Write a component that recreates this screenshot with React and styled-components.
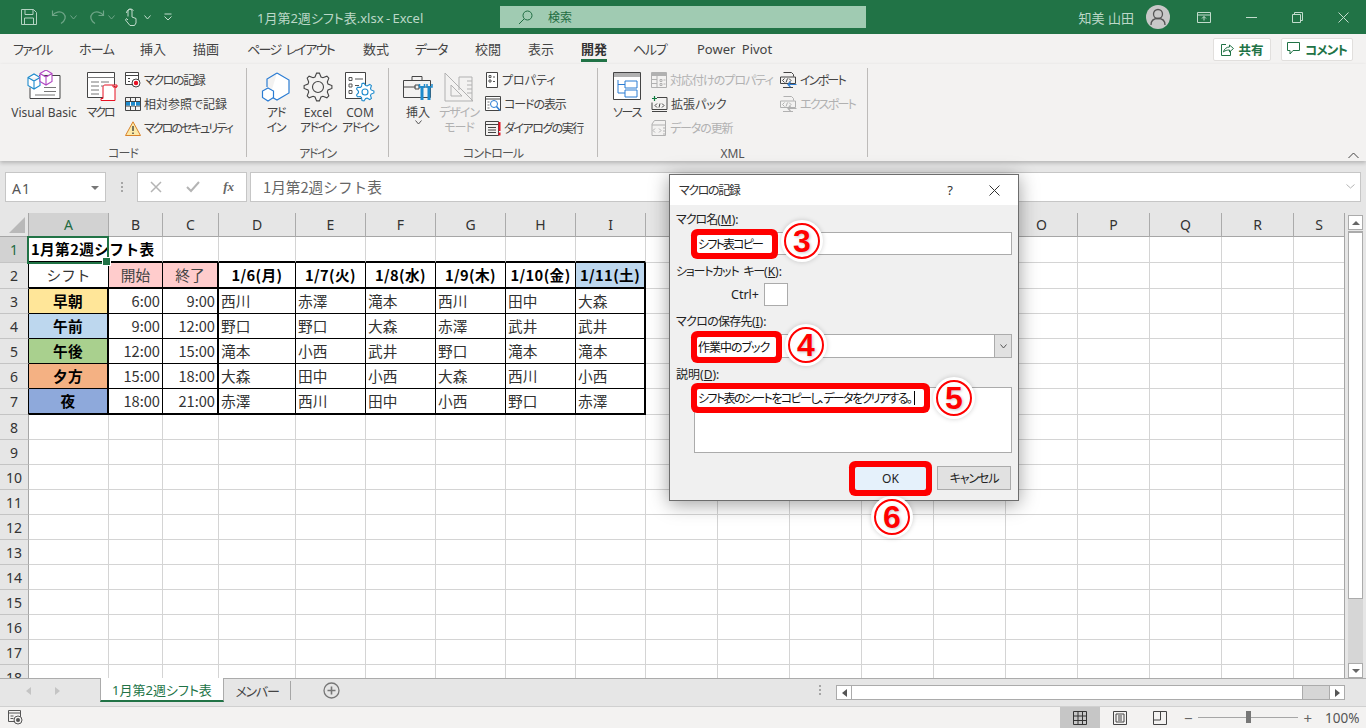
import React from 'react';
import styled, { createGlobalStyle } from 'styled-components';

const UI_FONT = '"Noto Sans", "Noto Sans CJK JP", sans-serif';
const CELL_FONT = '"Noto Sans CJK JP", sans-serif';
const GREEN = '#217346';

const GlobalStyle = createGlobalStyle`
  html, body { margin: 0; padding: 0; background: #fff; }
  * { box-sizing: border-box; }
  body {
    font-family: ${UI_FONT};
    font-feature-settings: "palt";
    overflow: hidden;
  }
`;

const Page = styled.div`
  position: relative;
  width: 1366px;
  height: 728px;
  display: flex;
  flex-direction: column;
  overflow: hidden;
  color: #444;
  font-size: 12px;
`;

// the reference's UI font has much narrower kana than Noto, so kana runs get squeezed
const Tight = styled.span`
  letter-spacing: ${p => p.$ls}px;
`;

/* ---------- title bar ---------- */
const TitleBar = styled.div`
  height: 34px;
  flex: none;
  background: ${GREEN};
  display: flex;
  align-items: center;
  color: #c3dccd;
`;
const Qat = styled.div`
  width: 257px;
  flex: none;
  display: flex;
  align-items: center;
  padding-left: 20px;
`;
const QatSlot = styled.span`
  display: flex;
  width: ${p => p.$w}px;
  flex: none;
`;
const FileName = styled.div`
  width: 243px;
  flex: none;
  font-size: 13px;
  white-space: pre;
  word-spacing: -1px;
  color: #bcd8c8;
`;
const SearchBox = styled.div`
  width: 366px;
  height: 22px;
  flex: none;
  background: #a0cbb2;
  display: flex;
  align-items: center;
  padding-left: 18px;
  gap: 15px;
  color: #1f6d42;
  font-size: 12px;
`;
const UserName = styled.div`
  margin-left: auto;
  font-size: 13px;
  color: #bcd8c8;
`;
const Avatar = styled.div`
  width: 24px;
  height: 24px;
  margin: 0 27px 0 12px;
  border-radius: 50%;
  background: #c8c8c8;
  display: flex;
  align-items: center;
  justify-content: center;
`;
const WinButtons = styled.div`
  display: flex;
  align-items: center;
  gap: 35px;
  padding-right: 17px;
`;

/* ---------- ribbon ---------- */
const TabRow = styled.div`
  height: 30px;
  flex: none;
  background: #f3f2f1;
  display: flex;
  padding-left: 13px;
  font-size: 13px;
  color: #444;
`;
const RibbonTab = styled.div`
  width: ${p => p.$w}px;
  flex: none;
  white-space: pre;
`;
const TabText = styled.span`
  display: inline-block;
  height: 28px;
  line-height: 30px;
  letter-spacing: ${p => p.$ls || 0}px;
  word-spacing: 3px;
  font-weight: ${p => (p.$active ? 700 : 400)};
  color: ${p => (p.$active ? '#333' : '#444')};
  border-bottom: ${p => (p.$active ? `3px solid ${GREEN}` : 'none')};
`;
const ShareGroup = styled.div`
  margin-left: auto;
  margin-right: 13px;
  align-self: center;
  display: flex;
  gap: 10px;
`;
const ShareButton = styled.div`
  width: ${p => p.$w}px;
  height: 23px;
  background: #fff;
  border: 1px solid #e1dfdd;
  border-radius: 2px;
  display: flex;
  align-items: center;
  justify-content: center;
  gap: 4px;
  color: ${GREEN};
  font-weight: 700;
  font-size: 12.5px;
`;
const Ribbon = styled.div`
  height: 97px;
  flex: none;
  position: relative;
  z-index: 2;
  background: #f3f2f1;
  display: flex;
  box-shadow: 0 2px 4px rgba(0, 0, 0, 0.22);
`;
const Group = styled.div`
  width: ${p => p.$w}px;
  flex: none;
  height: 89px;
  margin-top: 4px;
  display: flex;
  flex-direction: column;
  border-right: 1px solid #bdbbb9;
`;
const GroupBody = styled.div`
  height: 78px;
  flex: none;
  display: flex;
  padding-left: ${p => p.$pad}px;
`;
const GroupLabel = styled.div`
  text-align: center;
  font-size: 12px;
  line-height: 16px;
  letter-spacing: ${p => p.$ls || 0}px;
  color: #555;
`;
const BigButton = styled.div`
  width: ${p => p.$w}px;
  flex: none;
  display: flex;
  flex-direction: column;
  align-items: center;
  text-align: center;
  line-height: 15px;
  font-size: 12px;
  color: ${p => (p.$off ? '#b1b1b1' : '#444')};
  white-space: pre;
`;
const BigIcon = styled.div`
  height: 34px;
  margin-bottom: 3px;
  display: flex;
  align-items: flex-end;
  transform: translateX(${p => p.$shift || 0}px);
  padding-bottom: ${p => p.$lift || 0}px;
`;
const SmallColumn = styled.div`
  width: ${p => (p.$w ? `${p.$w}px` : 'auto')};
  flex: none;
  display: flex;
  flex-direction: column;
  margin-left: ${p => p.$ml || 0}px;
`;
const SmallButton = styled.div`
  height: 24px;
  display: flex;
  align-items: center;
  gap: 3px;
  white-space: nowrap;
  font-size: 12px;
  letter-spacing: ${p => p.$ls || 0}px;
  color: ${p => (p.$off ? '#b1b1b1' : '#444')};
`;
const Collapse = styled.div`
  align-self: flex-end;
  margin: 0 7px 2px auto;
  display: flex;
`;

/* ---------- formula bar ---------- */
const FormulaBar = styled.div`
  height: 52px;
  flex: none;
  background: #e6e6e6;
  display: flex;
  padding: 11px 5px 0;
  align-items: flex-start;
`;
const NameBox = styled.div`
  width: 101px;
  height: 30px;
  background: #fff;
  border: 1px solid #c6c6c6;
  display: flex;
  align-items: center;
  justify-content: space-between;
  padding: 2px 6px 0;
  font-size: 14px;
  letter-spacing: 1px;
  color: #555;
`;
const Caret = styled.span`
  width: 0;
  height: 0;
  border-left: 4px solid transparent;
  border-right: 4px solid transparent;
  border-top: 4px solid #777;
`;
const Dots = styled.div`
  width: 31px;
  height: 30px;
  display: flex;
  flex-direction: column;
  align-items: center;
  justify-content: center;
  gap: 2px;
  & > i {
    width: 2px;
    height: 2px;
    background: #a6a6a6;
  }
`;
const FnBox = styled.div`
  width: 110px;
  height: 30px;
  background: #fff;
  border: 1px solid #c6c6c6;
  display: flex;
  align-items: center;
  justify-content: space-between;
  padding: 0 12px;
  margin-right: 3px;
  color: #777;
`;
const FormulaInput = styled.div`
  flex: 1;
  height: 30px;
  background: #fff;
  border: 1px solid #c6c6c6;
  display: flex;
  align-items: center;
  justify-content: space-between;
  padding: 0 5px 2px 12px;
  font-family: ${CELL_FONT};
  font-feature-settings: normal;
  font-size: 14.67px;
  color: #666;
`;

/* ---------- sheet ---------- */
const SheetArea = styled.div`
  flex: 1;
  min-height: 0;
  display: flex;
  background: #e6e6e6;
`;
const Sheet = styled.div`
  width: 1345px;
  flex: none;
  overflow: hidden;
  display: grid;
  grid-template-columns: ${p => p.$cols};
  grid-template-rows: ${p => p.$rows};
  font-family: ${CELL_FONT};
  font-feature-settings: normal;
  font-size: 14.67px;
  color: #000;
  background: #fff;
  border-right: 1px solid #a6a6a6;
`;
const Corner = styled.div`
  background: #e6e6e6;
  border-right: 1px solid #a6a6a6;
  border-bottom: 1px solid #a6a6a6;
  display: flex;
  align-items: flex-end;
  justify-content: flex-end;
  padding: 0 3px 3px 0;
`;
const ColHead = styled.div`
  background: ${p => (p.$sel ? '#d2d2d2' : '#e6e6e6')};
  border-right: 1px solid #ababab;
  border-bottom: 1px solid #a6a6a6;
  display: flex;
  align-items: center;
  justify-content: center;
  font-size: 14px;
  font-family: ${UI_FONT};
  color: ${p => (p.$sel ? '#1f6b42' : '#333')};
`;
const RowHead = styled.div`
  background: ${p => (p.$sel ? '#d2d2d2' : '#e6e6e6')};
  border-right: 1px solid ${p => (p.$edge ? '#000' : '#a6a6a6')};
  border-bottom: 1px solid #c4c4c4;
  display: flex;
  align-items: center;
  justify-content: center;
  font-size: 14px;
  font-family: ${UI_FONT};
  color: ${p => (p.$sel ? '#1f6b42' : '#333')};
`;
const edge = v =>
  v === 'thick' ? '2px solid #000' : v === 'thin' ? '1px solid #000' : '1px solid #d4d4d4';
const Cell = styled.div`
  position: relative;
  min-width: 0;
  display: flex;
  align-items: center;
  white-space: nowrap;
  padding: 0 2px 2px;
  justify-content: ${p => p.$align || 'flex-start'};
  background: ${p => p.$bg || 'transparent'};
  font-weight: ${p => (p.$bold ? 700 : 400)};
  letter-spacing: ${p => (p.$bold ? 0.4 : 0)}px;
  color: ${p => p.$color || '#000'};
  border-right: ${p => edge(p.$r)};
  border-bottom: ${p => edge(p.$b)};
`;
const Selection = styled.div`
  position: absolute;
  left: -2px;
  top: -1px;
  right: -1px;
  bottom: -3px;
  border: 2px solid ${GREEN};
  pointer-events: none;
  z-index: 1;
  &::after {
    content: '';
    position: absolute;
    right: -4px;
    bottom: -4px;
    width: 7px;
    height: 7px;
    background: ${GREEN};
    border: 1px solid #fff;
  }
`;
const VScroll = styled.div`
  flex: 1;
  display: flex;
  flex-direction: column;
  padding: 2px 0 0 3px;
`;
const ScrollBtn = styled.div`
  width: 15px;
  height: 15px;
  flex: none;
  background: #fff;
  border: 1px solid #ababab;
  display: flex;
  align-items: center;
  justify-content: center;
`;
const VThumb = styled.div`
  width: 15px;
  height: 368px;
  margin-top: 1px;
  flex: none;
  background: #fff;
  border: 1px solid #ababab;
  border-top-width: 2px;
`;
const VTrack = styled.div`
  flex: 1;
  width: 15px;
  background: #d6d6d6;
`;
const Tri = styled.span`
  width: 0;
  height: 0;
  border-left: 4px solid transparent;
  border-right: 4px solid transparent;
  ${p => (p.$up ? 'border-bottom: 4px solid #666;' : 'border-top: 4px solid #666;')}
`;

/* ---------- sheet tabs ---------- */
const TabsBar = styled.div`
  height: 28px;
  flex: none;
  background: #e6e6e6;
  border-top: 1px solid #ababab;
  display: flex;
  align-items: flex-start;
  font-size: 13px;
  position: relative;
  z-index: 1;
`;
const NavArrows = styled.div`
  width: 100px;
  height: 24px;
  flex: none;
  display: flex;
  align-items: center;
  padding-left: 26px;
  gap: 24px;
`;
const SideTri = styled.span`
  width: 0;
  height: 0;
  border-top: 4px solid transparent;
  border-bottom: 4px solid transparent;
  ${p => (p.$left ? `border-right: 5px solid ${p.$c};` : `border-left: 5px solid ${p.$c};`)}
`;
const ActiveTab = styled.div`
  width: 124px;
  height: 24px;
  margin-top: -1px;
  flex: none;
  background: #fff;
  border-left: 1px solid #ababab;
  border-right: 1px solid #ababab;
  border-bottom: 2px solid ${GREEN};
  color: ${GREEN};
  display: flex;
  align-items: center;
  justify-content: center;
`;
const OtherTab = styled.div`
  width: 67px;
  height: 19px;
  flex: none;
  border-right: 1px solid #a6a6a6;
  margin-top: 2px;
  display: flex;
  align-items: center;
  justify-content: center;
  color: #444;
`;
const AddSheet = styled.div`
  margin: 3px 0 0 32px;
  display: flex;
`;
const SplitDots = styled(Dots)`
  width: 10px;
  height: 22px;
  margin-left: 475px;
`;
const HScroll = styled.div`
  margin: 6px 0 0 11px;
  width: 509px;
  height: 15px;
  display: flex;
  align-items: stretch;
  background: #d6d6d6;
  border: 1px solid #ababab;
`;
const HBtn = styled.div`
  width: 15px;
  flex: none;
  background: #fff;
  display: flex;
  align-items: center;
  justify-content: center;
  border-${p => p.$side}: 1px solid #ababab;
`;
const HThumb = styled.div`
  width: 451px;
  flex: none;
  background: #fff;
  border-right: 1px solid #ababab;
`;
const HGap = styled.div`
  flex: 1;
`;

/* ---------- status bar ---------- */
const StatusBar = styled.div`
  height: 22px;
  flex: none;
  background: #f3f2f1;
  border-top: 1px solid #d0d0d0;
  display: flex;
  align-items: center;
  padding-left: 8px;
  color: #555;
`;
const ViewButtons = styled.div`
  margin-left: auto;
  display: flex;
  height: 100%;
`;
const ViewButton = styled.div`
  width: 40px;
  display: flex;
  align-items: center;
  justify-content: center;
  background: ${p => (p.$active ? '#c6c6c6' : 'transparent')};
`;
const Zoomer = styled.div`
  display: flex;
  align-items: center;
  justify-content: space-between;
  width: 128px;
  margin-left: 4px;
  color: #666;
  font-size: 15px;
`;
const Slider = styled.div`
  position: relative;
  width: 100px;
  flex: none;
  height: 1px;
  background: #a6a6a6;
`;
const SliderThumb = styled.span`
  position: absolute;
  left: 48px;
  top: -6px;
  width: 5px;
  height: 12px;
  background: #777;
`;
const ZoomValue = styled.div`
  width: 41px;
  margin-left: 13px;
  font-size: 13.5px;
  color: #555;
`;

/* ---------- dialog ---------- */
const Dialog = styled.div`
  position: absolute;
  left: 669px;
  top: 174px;
  width: 350px;
  height: 327px;
  z-index: 5;
  background: #f0f0f0;
  border: 1px solid #6d6d6d;
  box-shadow: 0 3px 18px rgba(0, 0, 0, 0.38);
  color: #222;
  font-size: 12px;
`;
const DialogTitle = styled.div`
  height: 30px;
  background: #fff;
  display: flex;
  align-items: center;
  padding: 0 18px 0 9px;
  color: #333;
`;
const HelpMark = styled.span`
  margin-left: auto;
  margin-right: 36px;
  font-size: 13px;
`;
const DialogBody = styled.div`
  padding: 7px 6px 0 6px;
`;
const FieldLabel = styled.div`
  height: 16px;
  line-height: 16px;
  margin-top: ${p => p.$mt || 0}px;
  word-spacing: 3px;
  & u {
    text-underline-offset: 1px;
  }
`;
const Field = styled.div`
  position: relative;
  margin: ${p => p.$mt}px 0 0 18px;
  width: 318px;
  height: ${p => p.$h}px;
  background: #fff;
  border: 1px solid #ababab;
  display: flex;
  justify-content: flex-end;
`;
const Highlight = styled.div`
  position: absolute;
  left: 2px;
  top: ${p => p.$top}px;
  width: ${p => p.$w}px;
  height: ${p => p.$h}px;
  background: #fff;
  box-shadow: 0 0 0 6px #f00;
  border-radius: 2px;
  display: flex;
  align-items: center;
  padding-left: 1px;
  white-space: nowrap;
  color: #111;
  letter-spacing: ${p => p.$ls}px;
  z-index: 1;
`;
const TextCursor = styled.i`
  width: 1px;
  height: 14px;
  background: #000;
  margin-left: 3px;
`;
const Badge = styled.div`
  position: absolute;
  left: ${p => p.$left}px;
  top: ${p => p.$top}px;
  width: 36px;
  height: 36px;
  border-radius: 50%;
  background: #fff;
  border: 2px solid #f00;
  box-shadow: 0 0 0 3px #fff, 0 0 5px 3px rgba(0, 0, 0, 0.18);
  color: #f00;
  display: flex;
  align-items: center;
  justify-content: center;
  font-family: "Liberation Sans", sans-serif;
  font-weight: 700;
  font-size: 32px;
  line-height: 1;
  text-shadow: 1px 1px 3px rgba(0, 0, 0, 0.22);
  z-index: 2;
`;
const CtrlRow = styled.div`
  margin: 3px 0 0 55px;
  display: flex;
  align-items: center;
  gap: 5px;
  height: 23px;
  font-size: 12.5px;
`;
const KeyBox = styled.div`
  width: 24px;
  height: 23px;
  background: #fff;
  border: 1px solid #ababab;
`;
const SelectArrow = styled.div`
  width: 17px;
  background: #e1e1e1;
  border-left: 1px solid #ababab;
  display: flex;
  align-items: center;
  justify-content: center;
`;
const ButtonRow = styled.div`
  position: relative;
  margin-top: 13px;
  display: flex;
  justify-content: flex-end;
  gap: 11px;
  padding-right: 1px;
`;
const OkButton = styled.div`
  width: 71px;
  height: 23px;
  margin-top: 1px;
  background: #e5f1fb;
  box-shadow: 0 0 0 6px #f00;
  border-radius: 2px;
  display: flex;
  align-items: center;
  justify-content: center;
  color: #222;
`;
const CancelButton = styled.div`
  width: 74px;
  height: 24px;
  background: #e1e1e1;
  border: 1px solid #ababab;
  display: flex;
  align-items: center;
  justify-content: center;
`;

/* ---------- icons ---------- */
const Svg = ({ w, h, children, style }) => (
  <svg width={w} height={h} viewBox={`0 0 ${w} ${h}`} fill="none" style={{ display: 'block', flex: 'none', ...style }}>
    {children}
  </svg>
);

const SaveIcon = () => (
  <Svg w={18} h={18}>
    <path d="M1.5 1.5h12l3 3v12h-15z M5 1.5v5h8v-5 M4.5 16.5v-6.5h9v6.5" stroke="#b4d3c2" />
  </Svg>
);
const UndoIcon = ({ flip }) => (
  <Svg w={16} h={16} style={flip ? { transform: 'scaleX(-1)' } : undefined}>
    <path d="M1.5 1.5v5h5 M1.5 6.5C4 3 9 1.500 12.500 4.500c3 3 2 7-2.500 10" stroke="#6ea587" strokeWidth="1.2" />
  </Svg>
);
const TouchIcon = () => (
  <Svg w={14} h={18}>
    <path d="M4 8.500V3a2 2 0 0 1 4 0v6l4 1.500V15l-1.500 2.500H6L1.500 12l1-1.500L4 12 M2.500 5a4 4 0 0 1 7-2.500" stroke="#c3dccd" />
  </Svg>
);
const Chevron = ({ c = '#c3dccd', w = 7 }) => (
  <Svg w={w} h={5}>
    <path d={`M.5 .5L${w / 2} 4L${w - 0.5} .5`} stroke={c} />
  </Svg>
);
const QatMore = () => (
  <Svg w={8} h={8}>
    <path d="M.5 1h7 M.5 3.500L4 7l3.500-3.500" stroke="#c3dccd" />
  </Svg>
);
const SearchIcon = () => (
  <Svg w={15} h={15}>
    <circle cx="9.500" cy="5.500" r="4.500" stroke="#1f6d42" />
    <path d="M6 9L1 14" stroke="#1f6d42" />
  </Svg>
);
const AvatarIcon = () => (
  <Svg w={16} h={18}>
    <circle cx="8" cy="6" r="4.500" stroke="#555" strokeWidth="1.300" />
    <path d="M1 17c0-4 2.500-6.500 7-6.500s7 2.500 7 6.500" stroke="#555" strokeWidth="1.300" />
  </Svg>
);
const RibbonDisplayIcon = () => (
  <Svg w={14} h={11}>
    <path d="M.5 .5h13v10H.5z M.5 3h13 M7 8.500V4.500 M5 6.500l2-2 2 2" stroke="#c3dccd" />
  </Svg>
);
const MinIcon = () => (
  <Svg w={11} h={3}>
    <path d="M0 1.500h11" stroke="#c3dccd" />
  </Svg>
);
const RestoreIcon = () => (
  <Svg w={11} h={11}>
    <path d="M.5 2.500h8v8h-8z M2.500 2.500v-2h8v8h-2" stroke="#c3dccd" />
  </Svg>
);
const CloseIcon = ({ c = '#c3dccd', s = 11 }) => (
  <Svg w={s} h={s}>
    <path d={`M.5 .5L${s - 0.5} ${s - 0.5} M${s - 0.5} .5L.5 ${s - 0.5}`} stroke={c} />
  </Svg>
);
const ShareIcon = () => (
  <Svg w={14} h={14}>
    <path d="M6 2.500H1.500v11h9V9 M3.500 10c.5-3 3-5 6-5V3l4 3.500-4 3.500V8c-2.500 0-4.500.5-6 2z" stroke={GREEN} />
  </Svg>
);
const CommentIcon = () => (
  <Svg w={14} h={14}>
    <path d="M.5 .5h12v8H6l-3 3.500V8.500H.5z" stroke={GREEN} />
  </Svg>
);

const Cube = ({ x, y, c }) => (
  <path
    d={`M${x} ${y + 3.500}l6-3.500 6 3.500v8l-6 3.500-6-3.500z M${x} ${y + 3.500}l6 3.500 6-3.500 M${x + 6} ${y + 7}v8`}
    stroke={c}
    fill="#fff"
    strokeWidth="1.100"
  />
);
const VbaIcon = () => (
  <Svg w={34} h={32}>
    <path d="M12 5.500h21v23H3v-11" stroke="#444" fill="#fff" />
    <path d="M17 17.500h12 M17 21.500h12 M8 25h20" stroke="#777" />
    <Cube x={1} y={4} c="#1e8bcd" />
    <Cube x={13} y={0} c="#b146c2" />
  </Svg>
);
const MacroIcon = () => (
  <Svg w={31} h={30}>
    <path d="M.5 .5h27v25H.5z" stroke="#444" fill="#fff" />
    <path d="M.5 5.500h27 M4 10h8 M14 10h8 M4 14h8 M14 14h3 M4 18h8 M4 22h8" stroke="#777" />
    <path d="M18 13h12v2h-2v13.500H14v-2h2V15c0-1 1-2 2-2z M26 13v2h4" stroke="#e81123" fill="#fff" />
  </Svg>
);
const RecordIcon = () => (
  <Svg w={16} h={16}>
    <path d="M.5 .5h13v12H.5z M.5 3.500h13 M3 6.500h2 M3 9.500h2" stroke="#444" fill="#fff" />
    <circle cx="11" cy="11" r="4" fill="#fff" stroke="#444" />
    <circle cx="11" cy="11" r="2.200" fill="#e81123" />
  </Svg>
);
const RelativeIcon = () => (
  <Svg w={16} h={14}>
    <path d="M.5 .5h15v13H.5z M.5 4.500h15 M.5 9h15 M5.500 .5v13 M10.500 .5v13" stroke="#444" />
    <path d="M1 5h14v3.500H1z" fill="#1e8bcd" />
    <path d="M5.500 5v4 M10.500 5v4" stroke="#fff" />
  </Svg>
);
const WarnIcon = () => (
  <Svg w={16} h={15}>
    <path d="M8 .8L15.500 14.500H.5z" fill="#fbe9a8" stroke="#d9822b" />
    <path d="M8 5v5 M8 11.500v1.500" stroke="#333" strokeWidth="1.300" />
  </Svg>
);
const AddinIcon = () => (
  <Svg w={30} h={30}>
    <path d="M16 1l12 7v13l-12 7-7-4" stroke="#2b7cd3" strokeWidth="1.200" fill="#fff" />
    <path d="M16 1L6 7v8" stroke="#2b7cd3" strokeWidth="1.200" />
    <path d="M7 16l5.500 3v6.500L7 29l-5.500-3.500V19z" stroke="#2b7cd3" strokeWidth="1.200" fill="#fff" />
  </Svg>
);
const gearPath = (cx, cy, r1, r2, teeth) => {
  let d = '';
  const n = teeth * 4;
  for (let i = 0; i < n; i++) {
    const a = (i / n) * Math.PI * 2 - Math.PI / n;
    const r = i % 4 < 2 ? r1 : r2;
    d += `${i ? 'L' : 'M'}${(cx + r * Math.cos(a)).toFixed(1)} ${(cy + r * Math.sin(a)).toFixed(1)}`;
  }
  return d + 'z';
};
const GearIcon = () => (
  <Svg w={30} h={30}>
    <path d={gearPath(15, 15, 14, 10.500, 8)} stroke="#444" strokeWidth="1.100" />
    <circle cx="15" cy="15" r="5.500" stroke="#444" strokeWidth="1.100" />
  </Svg>
);
const ComIcon = () => (
  <Svg w={30} h={30}>
    <path d="M.5 .5h20v26H.5z" stroke="#444" fill="#fff" />
    <path d="M4 5.500h3v3H4z M4 12h3v3H4z M4 18.500h3v3H4z M10 7h8 M10 13.500h4" stroke="#555" />
    <path d={gearPath(20, 20, 9, 6.500, 7)} stroke="#1e8bcd" fill="#fff" strokeWidth="1.100" />
    <circle cx="20" cy="20" r="3" stroke="#1e8bcd" strokeWidth="1.100" />
  </Svg>
);
const ToolboxIcon = () => (
  <Svg w={30} h={30}>
    <path d="M.5 8.500h27v17H.5z M9 8.500V4.500h10v4 M.5 15h12 M16 15h11.500 M12 13h4v4h-4z" stroke="#444" />
    <path d="M19 14v14 M26 14v14" stroke="#1e8bcd" strokeWidth="3" />
    <path d="M16.500 12v3h5v-3 M24 12v3h5v-3" stroke="#1e8bcd" strokeWidth="1.500" />
  </Svg>
);
const RulerIcon = () => (
  <Svg w={30} h={30}>
    <path d="M1 1l28 28H1z M7 13v11h11z" stroke="#b1b1b1" fill="#f3f2f1" />
    <path d="M15 18V5h13v24 M23 9h5 M23 13h5 M23 17h5 M23 21h5" stroke="#b1b1b1" />
  </Svg>
);
const PropsIcon = () => (
  <Svg w={14} h={16}>
    <path d="M1.500 .5h11v15h-11z" stroke="#444" fill="#fff" />
    <path d="M4 3.500h2v2H4z M4 8h2v2H4z M8 5h2 M8 9.500h2" stroke="#555" />
  </Svg>
);
const ViewCodeIcon = () => (
  <Svg w={16} h={16}>
    <path d="M.5 .5h15v14H.5z M.5 3h15" stroke="#444" fill="#fff" />
    <circle cx="9" cy="8" r="3.500" stroke="#2b7cd3" />
    <path d="M11.500 10.500L15 14.500" stroke="#2b7cd3" strokeWidth="1.500" />
    <path d="M2.500 6h2 M2.500 9h2 M2.500 12h2" stroke="#777" />
  </Svg>
);
const RunIcon = () => (
  <Svg w={16} h={15}>
    <path d="M.5 .5h13v14H.5z M.5 3.500h13 M3 6.500h8 M3 9h8 M3 11.500h8" stroke="#444" />
    <path d="M14.500 1v9 M14.500 11.500v3" stroke="#e81123" strokeWidth="2" />
  </Svg>
);
const SourceIcon = () => (
  <Svg w={28} h={28}>
    <path d="M.5 .5h27v27H.5z" stroke="#444" fill="#fff" />
    <path d="M1 1h26v4H1z" fill="#b1b1b1" />
    <path d="M12 9h12v7H12z M12 18h12v7H12z M5 8v13h7 M5 12.500h7" stroke="#2b7cd3" />
  </Svg>
);
const MapPropsIcon = () => (
  <Svg w={16} h={16}>
    <path d="M.5 .5h15v15H.5z M.5 3.500h15 M6 3.500v12 M.5 7.500H6 M.5 11.500H6 M9 7.500h2v2H9z M9 11.500h2v2H9z M12.500 8h2 M12.500 12h2" stroke="#b1b1b1" />
    <path d="M1 1h14v2H1z" fill="#b1b1b1" />
  </Svg>
);
const PackIcon = () => (
  <Svg w={17} h={17}>
    <path d="M6 1.500h10v12H1v-7" stroke="#444" />
    <path d="M1 15.500h15" stroke="#444" />
    <path d="M3.500 0v5 M1 2.500h5" stroke="#107c41" strokeWidth="1.200" />
    <path d="M6 7.500l-2 2 2 2 M11 7.500l2 2-2 2 M8 11.500l1-4" stroke="#444" />
  </Svg>
);
const RefreshIcon = () => (
  <Svg w={16} h={17}>
    <path d="M3.500 .5h11v15H1V4z M1 5h13 M4 8.500l-2 2 2 2 M8 8.500l2 2-2 2 M12 8h2 M12 11h2 M12 14h2" stroke="#b1b1b1" />
  </Svg>
);
const ImportIcon = ({ c = '#444', a = '#2b7cd3' }) => (
  <Svg w={17} h={16}>
    <path d="M3.500 .5h8l2 2v2 M.5 5h15v6.500H.5z M3 15.500h10" stroke={c} />
    <path d="M4.500 6.500l-2 2 2 2 M9 6.500l2 2-2 2 M6 10.500l1.500-4" stroke={c} />
    <path d="M16.500 12.500H8 M10.500 10l-2.500 2.500 2.500 2.500" stroke={a} strokeWidth="1.200" />
  </Svg>
);
const TabPlus = () => (
  <Svg w={17} h={17}>
    <circle cx="8.500" cy="8.500" r="7.500" stroke="#777" strokeWidth="1.300" />
    <path d="M8.500 4.500v8 M4.500 8.500h8" stroke="#777" strokeWidth="1.600" />
  </Svg>
);
const MacroStatusIcon = () => (
  <Svg w={15} h={15}>
    <path d="M.5 .5h12v11H.5z M.5 3h12 M2.500 6h3 M2.500 8.500h3" stroke="#555" />
    <circle cx="10" cy="10" r="4" stroke="#555" fill="#f3f2f1" />
    <circle cx="10" cy="10" r="2" fill="#555" />
  </Svg>
);
const GridViewIcon = () => (
  <Svg w={14} h={14}>
    <path d="M.5 .5h13v13H.5z M.5 5h13 M.5 9.500h13 M5 .5v13 M9.500 .5v13" stroke="#333" />
  </Svg>
);
const PageViewIcon = () => (
  <Svg w={14} h={14}>
    <path d="M.5 .5h13v13H.5z M3 3h8v8H3z M5 5h4 M5 7h4 M5 9h4" stroke="#444" />
  </Svg>
);
const BreakViewIcon = () => (
  <Svg w={14} h={14}>
    <path d="M.5 .5h13v13H.5z M.5 9h7V.5 M7.500 9V.5" stroke="#444" />
  </Svg>
);
const CornerTriangle = () => (
  <Svg w={16} h={16}>
    <path d="M16 0v16H0z" fill="#b9b9b9" />
  </Svg>
);
const FnCancel = () => (
  <Svg w={12} h={12}>
    <path d="M1 1l10 10 M11 1L1 11" stroke="#b4b4b4" strokeWidth="1.500" />
  </Svg>
);
const FnOk = () => (
  <Svg w={14} h={12}>
    <path d="M1 6l4 4 8-9" stroke="#b4b4b4" strokeWidth="2" />
  </Svg>
);
const FxMark = styled.span`
  font-family: "Liberation Serif", serif;
  font-style: italic;
  font-weight: 700;
  font-size: 13px;
  color: #666;
`;

/* ---------- data ---------- */
const ribbonTabs = [
  { t: 'ファイル', w: 66, ls: -1.6 },
  { t: 'ホーム', w: 61, ls: -0.7 },
  { t: '挿入', w: 53 },
  { t: '描画', w: 54 },
  { t: 'ページ レイアウト', w: 116, ls: -1.6 },
  { t: '数式', w: 52 },
  { t: 'データ', w: 60, ls: -1.5 },
  { t: '校閲', w: 53 },
  { t: '表示', w: 53 },
  { t: '開発', w: 52 },
  { t: 'ヘルプ', w: 64, ls: -1.3 },
  { t: 'Power Pivot', w: 75, ls: 0 },
];
const colWidths = [80, 54, 56, 77, 70, 70, 70, 70, 70, 72, 72, 72, 72, 72, 72, 72, 72, 72, 51];
const colNames = 'ABCDEFGHIJKLMNOPQRS'.split('');
const rowHeights = [26, 26, 25, 25, 25, 25, 26, 25, 25, 25, 25, 25, 25, 25, 25, 25, 25, 25];

const shifts = [
  { label: '早朝', bg: '#ffe699', start: '6:00', end: '9:00' },
  { label: '午前', bg: '#bdd7ee', start: '9:00', end: '12:00' },
  { label: '午後', bg: '#a9d08e', start: '12:00', end: '15:00' },
  { label: '夕方', bg: '#f4b183', start: '15:00', end: '18:00' },
  { label: '夜', bg: '#8ea9db', start: '18:00', end: '21:00' },
];
const dates = ['1/6(月)', '1/7(火)', '1/8(水)', '1/9(木)', '1/10(金)', '1/11(土)'];
const staff = [
  ['西川', '赤澤', '滝本', '西川', '田中', '大森'],
  ['野口', '野口', '大森', '赤澤', '武井', '武井'],
  ['滝本', '小西', '武井', '野口', '滝本', '滝本'],
  ['大森', '田中', '小西', '大森', '西川', '小西'],
  ['赤澤', '西川', '田中', '小西', '野口', '赤澤'],
];

// cell content + borders for one sheet position (r, c are 0-based)
const cellProps = (r, c) => {
  const p = {};
  const inTable = r >= 1 && r <= 6 && c <= 8;
  if (r === 0 && c <= 8) p.$b = 'thick';
  if (inTable) {
    p.$b = r === 1 || r === 6 ? 'thick' : 'thin';
    p.$r = c === 0 || c === 2 || c === 8 ? 'thick' : 'thin';
    if (r === 1 && c === 0) p.$r = 'thin';
  }
  if (r === 0 && c === 0) {
    p.children = '1月第2週シフト表';
    p.$bold = true;
  }
  if (r === 1) {
    if (c === 0) Object.assign(p, { children: 'シフト', $align: 'center', $color: '#333' });
    if (c === 1) Object.assign(p, { children: '開始', $align: 'center', $bg: '#ffcccc', $color: '#444' });
    if (c === 2) Object.assign(p, { children: '終了', $align: 'center', $bg: '#ffcccc', $color: '#444' });
    if (c >= 3 && c <= 8) {
      Object.assign(p, { children: dates[c - 3], $align: 'center', $bold: true });
      if (c === 8) p.$bg = '#bdd7ee';
    }
  }
  if (r >= 2 && r <= 6) {
    const s = shifts[r - 2];
    if (c === 0) Object.assign(p, { children: s.label, $align: 'center', $bold: true, $bg: s.bg });
    if (c === 1) Object.assign(p, { children: s.start, $align: 'flex-end', $color: '#333' });
    if (c === 2) Object.assign(p, { children: s.end, $align: 'flex-end', $color: '#333' });
    if (c >= 3 && c <= 8) Object.assign(p, { children: staff[r - 2][c - 3], $color: '#333' });
  }
  return p;
};

const Label = ({ text, k, ls }) => (
  <>
    <Tight $ls={ls}>{text}</Tight>(<u>{k}</u>):
  </>
);

export default function App() {
  return (
    <Page>
      <GlobalStyle />
      <TitleBar>
        <Qat>
          <QatSlot $w={31}><SaveIcon /></QatSlot>
          <QatSlot $w={19}><UndoIcon /></QatSlot>
          <QatSlot $w={19}><Chevron c="#6ea587" /></QatSlot>
          <QatSlot $w={19}><UndoIcon flip /></QatSlot>
          <QatSlot $w={16}><Chevron c="#6ea587" /></QatSlot>
          <QatSlot $w={20}><TouchIcon /></QatSlot>
          <QatSlot $w={20}><Chevron /></QatSlot>
          <QatSlot $w={10}><QatMore /></QatSlot>
        </Qat>
        <FileName>1月第2週シフト表.xlsx - Excel</FileName>
        <SearchBox>
          <SearchIcon />
          <span>検索</span>
        </SearchBox>
        <UserName>知美 山田</UserName>
        <Avatar><AvatarIcon /></Avatar>
        <WinButtons>
          <RibbonDisplayIcon />
          <MinIcon />
          <RestoreIcon />
          <CloseIcon />
        </WinButtons>
      </TitleBar>

      <TabRow>
        {ribbonTabs.map(({ t, w, ls }) => (
          <RibbonTab key={t} $w={w}>
            <TabText $ls={ls} $active={t === '開発'}>{t}</TabText>
          </RibbonTab>
        ))}
        <ShareGroup>
          <ShareButton $w={58}><ShareIcon />共有</ShareButton>
          <ShareButton $w={72}><CommentIcon /><Tight $ls={-0.8}>コメント</Tight></ShareButton>
        </ShareGroup>
      </TabRow>

      <Ribbon>
        <Group $w={247}>
          <GroupBody $pad={10}>
            <BigButton $w={68}><BigIcon><VbaIcon /></BigIcon>Visual Basic</BigButton>
            <BigButton $w={44}><BigIcon $shift={2}><MacroIcon /></BigIcon><Tight $ls={-2}>マクロ</Tight></BigButton>
            <SmallColumn $ml={3}>
              <SmallButton $ls={-1.4}><RecordIcon />マクロの記録</SmallButton>
              <SmallButton><RelativeIcon />相対参照で記録</SmallButton>
              <SmallButton $ls={-1.9}><WarnIcon />マクロのセキュリティ</SmallButton>
            </SmallColumn>
          </GroupBody>
          <GroupLabel $ls={-1}>コード</GroupLabel>
        </Group>
        <Group $w={142}>
          <GroupBody $pad={8}>
            <BigButton $w={42}><BigIcon><AddinIcon /></BigIcon><Tight $ls={-1.3}>{'アド\nイン'}</Tight></BigButton>
            <BigButton $w={42}><BigIcon><GearIcon /></BigIcon>Excel<Tight $ls={-1.5}>アドイン</Tight></BigButton>
            <BigButton $w={42}><BigIcon><ComIcon /></BigIcon>COM<Tight $ls={-1.5}>アドイン</Tight></BigButton>
          </GroupBody>
          <GroupLabel $ls={-1.3}>アドイン</GroupLabel>
        </Group>
        <Group $w={209}>
          <GroupBody $pad={9}>
            <BigButton $w={40}><BigIcon><ToolboxIcon /></BigIcon>挿入<Chevron c="#555" /></BigButton>
            <BigButton $w={42} $off><BigIcon><RulerIcon /></BigIcon><Tight $ls={-1}>{'デザイン\nモード'}</Tight></BigButton>
            <SmallColumn $ml={5}>
              <SmallButton><PropsIcon />プロパティ</SmallButton>
              <SmallButton $ls={-1.1}><ViewCodeIcon />コードの表示</SmallButton>
              <SmallButton $ls={-1.5}><RunIcon />ダイアログの実行</SmallButton>
            </SmallColumn>
          </GroupBody>
          <GroupLabel $ls={-1}>コントロール</GroupLabel>
        </Group>
        <Group $w={270}>
          <GroupBody $pad={7}>
            <BigButton $w={44}><BigIcon $lift={2}><SourceIcon /></BigIcon><Tight $ls={-1.3}>ソース</Tight></BigButton>
            <SmallColumn $ml={2} $w={129}>
              <SmallButton $off $ls={-1}><MapPropsIcon />対応付けのプロパティ</SmallButton>
              <SmallButton><PackIcon />拡張パック</SmallButton>
              <SmallButton $off $ls={-1.1}><RefreshIcon />データの更新</SmallButton>
            </SmallColumn>
            <SmallColumn>
              <SmallButton $ls={-1.8}><ImportIcon />インポート</SmallButton>
              <SmallButton $off $ls={-1.7}><ImportIcon c="#b1b1b1" a="#b1b1b1" />エクスポート</SmallButton>
            </SmallColumn>
          </GroupBody>
          <GroupLabel>XML</GroupLabel>
        </Group>
        <Collapse>
          <Svg w={11} h={7}><path d="M.5 6L5.500 1l5 5" stroke="#444" /></Svg>
        </Collapse>
      </Ribbon>

      <FormulaBar>
        <NameBox>A1<Caret /></NameBox>
        <Dots><i /><i /><i /></Dots>
        <FnBox><FnCancel /><FnOk /><FxMark>fx</FxMark></FnBox>
        <FormulaInput>
          1月第2週シフト表
          <Chevron c="#b4b4b4" w={9} />
        </FormulaInput>
      </FormulaBar>

      <SheetArea>
        <Sheet
          $cols={`29px ${colWidths.map(w => `${w}px`).join(' ')}`}
          $rows={`24px ${rowHeights.map(h => `${h}px`).join(' ')}`}
        >
          <Corner><CornerTriangle /></Corner>
          {colNames.map((n, i) => (
            <ColHead key={n} $sel={i === 0}>{n}</ColHead>
          ))}
          {rowHeights.map((_, r) => (
            <React.Fragment key={r}>
              <RowHead $sel={r === 0} $edge={r >= 1 && r <= 6}>{r + 1}</RowHead>
              {colNames.map((n, c) => {
                const { children, ...rest } = cellProps(r, c);
                return (
                  <Cell key={n} {...rest}>
                    {children}
                    {r === 0 && c === 0 && <Selection />}
                  </Cell>
                );
              })}
            </React.Fragment>
          ))}
        </Sheet>
        <VScroll>
          <ScrollBtn><Tri $up /></ScrollBtn>
          <VThumb />
          <VTrack />
          <ScrollBtn><Tri /></ScrollBtn>
        </VScroll>
      </SheetArea>

      <TabsBar>
        <NavArrows>
          <SideTri $left $c="#c4c4c4" />
          <SideTri $c="#c4c4c4" />
        </NavArrows>
        <ActiveTab>1月第2週シフト表</ActiveTab>
        <OtherTab><Tight $ls={-1.2}>メンバー</Tight></OtherTab>
        <AddSheet><TabPlus /></AddSheet>
        <SplitDots><i /><i /><i /></SplitDots>
        <HScroll>
          <HBtn $side="right"><SideTri $left $c="#555" /></HBtn>
          <HThumb />
          <HGap />
          <HBtn $side="left"><SideTri $c="#555" /></HBtn>
        </HScroll>
      </TabsBar>

      <StatusBar>
        <MacroStatusIcon />
        <ViewButtons>
          <ViewButton $active><GridViewIcon /></ViewButton>
          <ViewButton><PageViewIcon /></ViewButton>
          <ViewButton><BreakViewIcon /></ViewButton>
        </ViewButtons>
        <Zoomer>
          <span>−</span>
          <Slider><SliderThumb /></Slider>
          <span>+</span>
        </Zoomer>
        <ZoomValue>100%</ZoomValue>
      </StatusBar>

      <Dialog>
        <DialogTitle>
          <Tight $ls={-1.4}>マクロの記録</Tight>
          <HelpMark>?</HelpMark>
          <CloseIcon c="#333" s={11} />
        </DialogTitle>
        <DialogBody>
          <FieldLabel><Label text="マクロ名" k="M" ls={-1} /></FieldLabel>
          <Field $mt={4} $h={23}>
            <Highlight $top={2} $w={75} $h={18} $ls={-1.8}>シフト表コピー</Highlight>
            <Badge $left={89} $top={-10}>3</Badge>
          </Field>
          <FieldLabel $mt={9}><Label text="ショートカット キー" k="K" ls={-1.2} /></FieldLabel>
          <CtrlRow>Ctrl+<KeyBox /></CtrlRow>
          <FieldLabel $mt={8}><Label text="マクロの保存先" k="I" ls={-0.7} /></FieldLabel>
          <Field $mt={4} $h={24}>
            <Highlight $top={2} $w={79} $h={20} $ls={-1}>作業中のブック</Highlight>
            <Badge $left={93} $top={-8}>4</Badge>
            <SelectArrow><Chevron c="#555" /></SelectArrow>
          </Field>
          <FieldLabel $mt={9}><Label text="説明" k="D" /></FieldLabel>
          <Field $mt={4} $h={66}>
            <Highlight $top={1} $w={227} $h={18} $ls={-1.6}>
              シフト表のシートをコピーし、データをクリアする。<TextCursor />
            </Highlight>
            <Badge $left={241} $top={-8}>5</Badge>
          </Field>
          <ButtonRow>
            <OkButton>OK</OkButton>
            <CancelButton><Tight $ls={-1.1}>キャンセル</Tight></CancelButton>
            <Badge $left={198} $top={33}>6</Badge>
          </ButtonRow>
        </DialogBody>
      </Dialog>
    </Page>
  );
}
